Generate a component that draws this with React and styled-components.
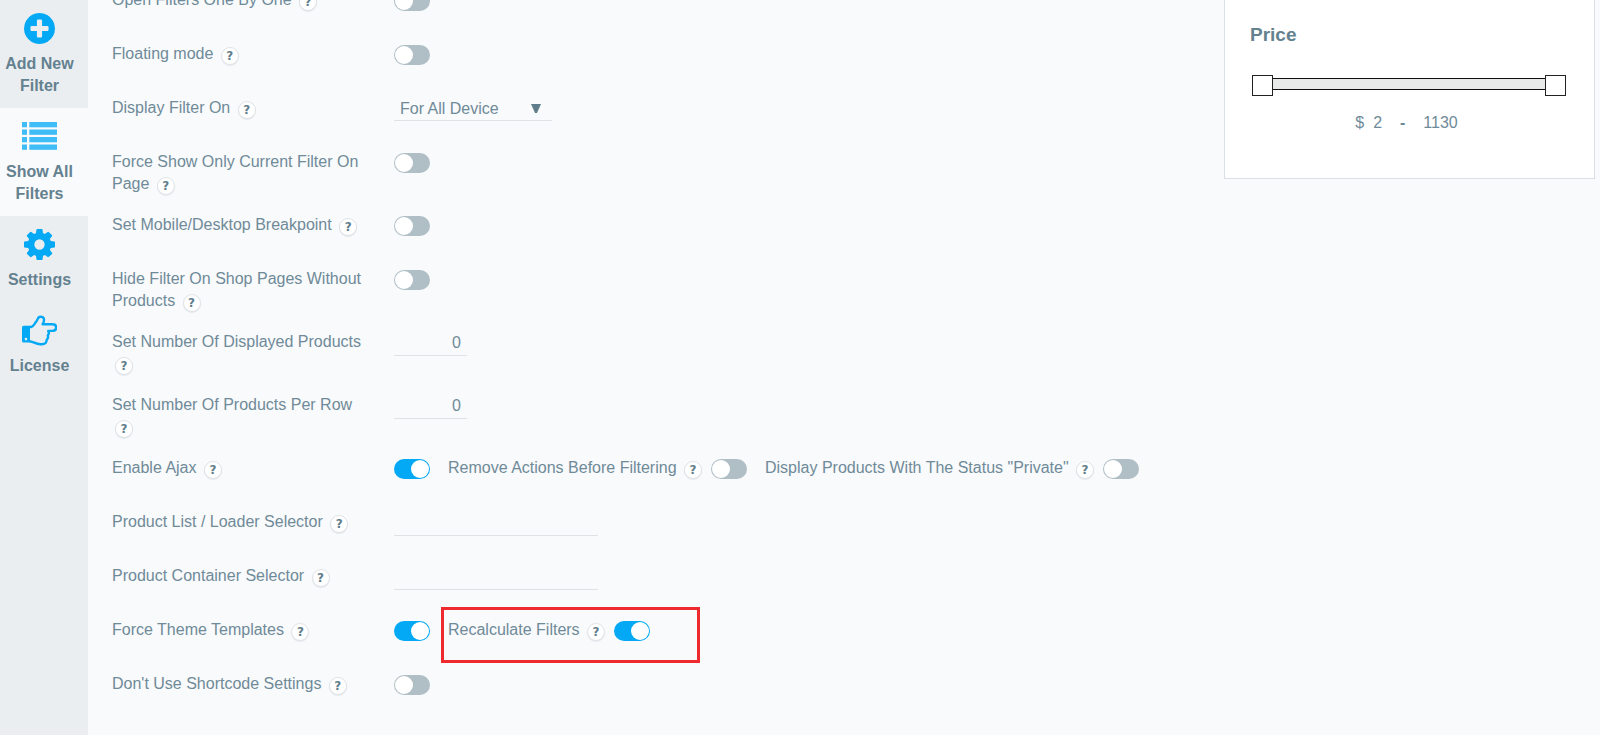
import React, { useState } from 'react';
import styled, { createGlobalStyle, css } from 'styled-components';

const GlobalStyle = createGlobalStyle`
  * {
    box-sizing: border-box;
  }
  body {
    margin: 0;
    background: #f9fafc;
    color: #6f8a98;
    font: 16px/22px "Liberation Sans", Arial, sans-serif;
  }
  input, select, button {
    font: inherit;
    color: inherit;
  }
`;

const Page = styled.div`
  display: flex;
  align-items: stretch;
  min-height: 100vh;
  overflow: hidden;
`;

const Sidebar = styled.nav`
  flex: 0 0 88px;
  background: #ebeef1;
`;

const NavLink = styled.a`
  display: flex;
  flex-direction: column;
  align-items: center;
  gap: 9px;
  padding: 13px 13px 11px 4px;
  color: #64818f;
  font-weight: bold;
  text-align: center;
  text-decoration: none;
  background: ${props => (props.$active ? '#f9fafc' : 'transparent')};

  svg {
    height: 31px;
    fill: #03a9f4;
    opacity: ${props => (props.$active ? 0.75 : 1)};
  }
`;

const Settings = styled.main`
  flex: 1;
  min-width: 0;
  margin-top: -11px;
  padding: 0 24px;
`;

const Row = styled.div`
  display: flex;
  gap: 26px;
  min-height: 54px;
  padding-bottom: 19px;
`;

const RowLabel = styled.div`
  flex: 0 0 256px;
`;

const Controls = styled.div`
  display: flex;
  align-items: flex-start;
  gap: 18px;
`;

const Extra = styled.div`
  position: relative;
  display: flex;
  align-items: flex-start;
  gap: 9px;
  white-space: nowrap;

  ${props => props.$marked && css`
    &::after {
      content: '';
      position: absolute;
      top: -12px;
      right: -50px;
      bottom: -22px;
      left: -7px;
      border: 3px solid #ee2a2e;
      pointer-events: none;
    }
  `}
`;

const HelpButton = styled.button`
  width: 18px;
  height: 18px;
  margin-left: 3px;
  padding: 0;
  border: 1px solid #dfe4e8;
  border-radius: 50%;
  background: #fff;
  box-shadow: 0 1px 1px #e4e8eb;
  color: #5f7d8b;
  font: bold 12px/14px "DejaVu Sans", sans-serif;
  text-align: center;
  vertical-align: -1px;
`;

const Switch = styled.input`
  flex: none;
  appearance: none;
  width: 36px;
  height: 20px;
  margin: 2px 0 0;
  padding: 1px;
  border-radius: 10px;
  background: #b0bec5;
  cursor: pointer;

  &::before {
    content: '';
    display: block;
    width: 18px;
    height: 18px;
    border-radius: 50%;
    background: #fff;
  }
  &:checked {
    background: #03a9f4;
  }
  &:checked::before {
    margin-left: auto;
  }
`;

const SelectWrap = styled.div`
  display: flex;
  align-items: center;
  width: 158px;
  height: 24px;
  border-bottom: 1px solid #dfe3e6;
`;

const Select = styled.select`
  appearance: none;
  flex: 1;
  width: 100%;
  padding: 0 6px;
  border: 0;
  outline: 0;
  background: transparent;
`;

const Arrow = styled.svg`
  flex: none;
  width: 10px;
  height: 9px;
  margin-right: 11px;
  fill: #5f7d8b;
  pointer-events: none;
`;

const Field = styled.input`
  width: ${props => (props.$short ? 73 : 204)}px;
  height: 25px;
  padding: 0 6px;
  border: 0;
  border-bottom: 1px solid #dfe3e6;
  outline: 0;
  background: transparent;
  text-align: ${props => (props.$short ? 'right' : 'left')};
`;

const Preview = styled.aside`
  flex: 0 0 376px;
  padding-right: 5px;
`;

const PriceCard = styled.section`
  padding: 23px 28px 44px 25px;
  border: 1px solid #d9e0e5;
  border-top: 0;
  background: #fff;
`;

const PriceTitle = styled.h3`
  margin: 0 0 28px;
  font-size: 19px;
  line-height: 24px;
  color: #64818f;
`;

const Slider = styled.div`
  display: grid;
  align-items: center;
  height: 21px;
  margin-left: 2px;

  &::before {
    content: '';
    grid-area: 1 / 1;
    height: 10px;
    margin-bottom: 3px;
    border: solid #111;
    border-width: 1px 0;
    background: #e8eaea;
  }
`;

const thumb = css`
  appearance: none;
  width: 21px;
  height: 21px;
  border: 1px solid #222;
  border-radius: 0;
  background: #fff;
  pointer-events: auto;
`;

const Range = styled.input`
  grid-area: 1 / 1;
  appearance: none;
  width: 100%;
  height: 21px;
  margin: 0;
  background: transparent;
  pointer-events: none;

  &::-webkit-slider-thumb {
    ${thumb}
  }
  &::-moz-range-thumb {
    ${thumb}
  }
`;

const PriceRange = styled.div`
  display: flex;
  justify-content: center;
  gap: 18px;
  margin-top: 16px;
  padding-right: 3px;
`;

const Amount = styled.span`
  display: inline-flex;
  gap: 9px;
`;

const PlusIcon = () => (
  <svg viewBox='0 0 1536 1536' width='31'>
    <path d='M1216 832V704q0-26-19-45t-45-19H896V384q0-26-19-45t-45-19H704q-26 0-45 19t-19 45v256H384q-26 0-45 19t-19 45v128q0 26 19 45t45 19h256v256q0 26 19 45t45 19h128q26 0 45-19t19-45V896h256q26 0 45-19t19-45zm320-64q0 209-103 385.5T1153.5 1433 768 1536t-385.5-103T103 1153.5 0 768t103-385.5T382.5 103 768 0t385.5 103T1433 382.5 1536 768z' />
  </svg>
);

const ListIcon = () => (
  <svg viewBox='0 0 35 29' width='35'>
    {[0, 7.5, 15, 22.5].map(y => (
      <g key={y}>
        <rect x='0' y={y} width='5' height='5.3' />
        <rect x='7.3' y={y} width='27.7' height='5.3' />
      </g>
    ))}
  </svg>
);

const CogIcon = () => (
  <svg viewBox='0 0 1536 1536' width='31'>
    <path d='M1024 768q0-106-75-181t-181-75-181 75-75 181 75 181 181 75 181-75 75-181zm512-109v222q0 12-8 23t-20 13l-185 28q-19 54-39 91 35 50 107 138 10 12 10 25t-9 23q-27 37-99 108t-94 71q-12 0-26-9l-138-108q-44 23-91 38-16 136-29 186-7 28-36 28H657q-14 0-24.5-8.5T621 1506l-28-184q-49-16-90-37l-141 107q-10 9-25 9-14 0-25-11-126-114-165-168-7-10-7-23 0-12 8-23 15-21 51-66.5t54-70.5q-27-50-41-99L29 913q-13-2-21-12.5T0 877V655q0-12 8-23t19-13l186-28q14-46 39-92-40-57-107-138-10-12-10-24 0-10 9-23 26-36 98.5-107.5T337 135q13 0 26 10l138 107q44-23 91-38 16-136 29-186 7-28 36-28h222q14 0 24.5 8.5T915 30l28 184q49 16 90 37l142-107q9-9 24-9 13 0 25 10 129 119 165 170 7 8 7 22 0 12-8 23-15 21-51 66.5t-54 70.5q26 50 41 98l183 28q13 2 21 12.5t8 23.5z' />
  </svg>
);

const HandIcon = () => (
  <svg viewBox='0 0 35 30' width='35'>
    <path
      fillRule='evenodd'
      d='M1.600 10.300H8V27H1.600Q0 27 0 25.400V11.900Q0 10.300 1.600 10.300zM4 22.300a1.300 1.300 0 1 0 0 2.600 1.300 1.300 0 1 0 0-2.600z'
    />
    <path
      d='M7.500 11.500h1.700c2.200-.3 3.300-3.300 5-5.400 1.700-1.700 1.200-4.900 4.200-4.900 4.500 0 4.300 4 2.200 7.600h9.800c5 0 5 6.600 0 6.600h-4.200c.9 1.700.8 3.300-.4 4.600.6 1.800.1 3.300-1.200 4.400.2 3-1.700 4.400-4.600 4.400h-1.700c-4.600 0-6.700-2.600-9.800-2.800h-1'
      style={{ fill: 'none' }}
      stroke='#03a9f4'
      strokeWidth='2.400'
      strokeLinejoin='round'
    />
  </svg>
);

const navItems = [
  { label: 'Add New Filter', icon: <PlusIcon /> },
  { label: 'Show All Filters', icon: <ListIcon />, active: true },
  { label: 'Settings', icon: <CogIcon /> },
  { label: 'License', icon: <HandIcon /> },
];

const rows = [
  { id: 'one_by_one', label: 'Open Filters One By One', type: 'switch' },
  { id: 'floating', label: 'Floating mode', type: 'switch' },
  { id: 'display_on', label: 'Display Filter On', type: 'select' },
  { id: 'only_current', label: 'Force Show Only Current Filter On Page', type: 'switch' },
  { id: 'breakpoint', label: 'Set Mobile/Desktop Breakpoint', type: 'switch' },
  { id: 'hide_empty', label: 'Hide Filter On Shop Pages Without Products', type: 'switch' },
  { id: 'count', label: 'Set Number Of Displayed Products', type: 'number' },
  { id: 'per_row', label: 'Set Number Of Products Per Row', type: 'number' },
  {
    id: 'ajax',
    label: 'Enable Ajax',
    type: 'switch',
    on: true,
    extras: [
      { id: 'remove_actions', label: 'Remove Actions Before Filtering' },
      { id: 'private', label: 'Display Products With The Status "Private"' },
    ],
  },
  { id: 'list_selector', label: 'Product List / Loader Selector', type: 'text' },
  { id: 'container_selector', label: 'Product Container Selector', type: 'text' },
  {
    id: 'force_theme',
    label: 'Force Theme Templates',
    type: 'switch',
    on: true,
    extras: [{ id: 'recalculate', label: 'Recalculate Filters', on: true, marked: true }],
  },
  { id: 'no_shortcode', label: "Don't Use Shortcode Settings", type: 'switch' },
];

const Help = () => <HelpButton type='button' aria-label='Help'>?</HelpButton>;

const Control = ({ row }) => {
  if (row.type === 'select') {
    return (
      <SelectWrap>
        <Select id={row.id} defaultValue='all'>
          <option value='all'>For All Device</option>
          <option value='mobile'>Only For Mobile</option>
          <option value='desktop'>Only For Desktop</option>
        </Select>
        <Arrow viewBox='0 0 10 9'><path d='M0 0h10L6 9H4z' /></Arrow>
      </SelectWrap>
    );
  }
  if (row.type === 'number') {
    return <Field id={row.id} $short inputMode='numeric' defaultValue='0' />;
  }
  if (row.type === 'text') {
    return <Field id={row.id} type='text' />;
  }
  return <Switch id={row.id} type='checkbox' defaultChecked={row.on} />;
};

const SettingRow = ({ row }) => (
  <Row>
    <RowLabel>
      <label htmlFor={row.id}>{row.label}</label> <Help />
    </RowLabel>
    <Controls>
      <Control row={row} />
      {(row.extras || []).map(extra => (
        <Extra key={extra.id} $marked={extra.marked}>
          <span>
            <label htmlFor={extra.id}>{extra.label}</label> <Help />
          </span>
          <Switch id={extra.id} type='checkbox' defaultChecked={extra.on} />
        </Extra>
      ))}
    </Controls>
  </Row>
);

const PriceFilter = () => {
  const [min, setMin] = useState(2);
  const [max, setMax] = useState(1130);

  return (
    <PriceCard>
      <PriceTitle>Price</PriceTitle>
      <Slider>
        <Range
          type='range'
          aria-label='Minimum price'
          min='2'
          max='1130'
          value={min}
          onChange={e => setMin(Math.min(Number(e.target.value), max))}
        />
        <Range
          type='range'
          aria-label='Maximum price'
          min='2'
          max='1130'
          value={max}
          onChange={e => setMax(Math.max(Number(e.target.value), min))}
        />
      </Slider>
      <PriceRange>
        <Amount><span>$</span><span>{min}</span></Amount>
        <b>-</b>
        <span>{max}</span>
      </PriceRange>
    </PriceCard>
  );
};

const App = () => (
  <>
    <GlobalStyle />
    <Page>
      <Sidebar>
        {navItems.map(item => (
          <NavLink key={item.label} href='#' $active={item.active}>
            {item.icon}
            {item.label}
          </NavLink>
        ))}
      </Sidebar>
      <Settings>
        {rows.map(row => <SettingRow key={row.id} row={row} />)}
      </Settings>
      <Preview>
        <PriceFilter />
      </Preview>
    </Page>
  </>
);

export default App;
